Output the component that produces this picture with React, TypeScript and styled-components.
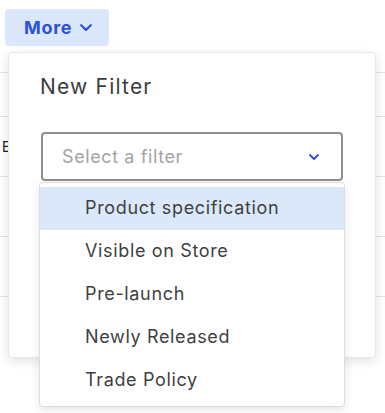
import styled, { createGlobalStyle } from "styled-components";

const GlobalStyle = createGlobalStyle`
  html, body {
    margin: 0;
    padding: 0;
    background: #ffffff;
  }
  body {
    font-family: Inter, "Noto Sans", "Liberation Sans", sans-serif;
    color: #3f3f40;
  }
`;

const Page = styled.div`
  position: relative;
  width: 385px;
  height: 413px;
  overflow: hidden;
`;

const Toolbar = styled.div`
  display: flex;
  padding: 9px 0 0 5px;
  height: 72px;
  box-sizing: border-box;
`;

const MoreButton = styled.button`
  display: flex;
  align-items: center;
  gap: 8px;
  height: 37px;
  width: 104px;
  padding: 0 0 0 19px;
  border: none;
  border-radius: 4px;
  background: #dbe7fa;
  color: #2953da;
  font-family: inherit;
  font-size: 18px;
  font-weight: 700;
  letter-spacing: 0.7px;
  cursor: pointer;
`;

const Table = styled.div`
  border-top: 1px solid #e3e4e6;
`;

const Row = styled.div<{ $tall?: boolean }>`
  height: ${(p) => (p.$tall ? 59 : 43)}px;
  border-bottom: 1px solid #e3e4e6;
  display: flex;
  align-items: center;
  padding-left: 2px;
  font-size: 14px;
  color: #1d2026;
`;

const Popover = styled.div`
  position: absolute;
  left: 8px;
  top: 52px;
  width: 368px;
  height: 306px;
  box-sizing: border-box;
  padding: 20px 32px 0;
  background: #fff;
  border: 1px solid #e7e7e9;
  border-radius: 4px;
  box-shadow: 0 3px 12px rgba(0, 0, 0, 0.12);
`;

const Title = styled.h3`
  margin: 0 0 0 -1px;
  font-size: 21px;
  font-weight: 400;
  letter-spacing: 1.2px;
  line-height: 28px;
  color: #3d3d3d;
`;

const SelectWrap = styled.div`
  position: relative;
  margin-top: 31px;
`;

const SelectBox = styled.div`
  display: flex;
  align-items: center;
  justify-content: space-between;
  height: 49px;
  box-sizing: border-box;
  padding: 0 22px 0 19px;
  border: 2px solid #8f8f8f;
  border-radius: 4px;
  font-size: 18px;
  letter-spacing: 0.6px;
  color: #a3a3a3;
`;

const Menu = styled.ul`
  position: absolute;
  left: -2px;
  right: -2px;
  top: 50px;
  margin: 0;
  padding: 4px 0;
  list-style: none;
  background: #fff;
  border: 1px solid #dcdcdc;
  border-radius: 4px;
  box-shadow: 0 3px 10px rgba(0, 0, 0, 0.1);
`;

const Option = styled.li<{ $active?: boolean }>`
  height: 43px;
  display: flex;
  align-items: center;
  padding-left: 45px;
  padding-bottom: 2px;
  box-sizing: border-box;
  font-size: 18px;
  letter-spacing: 0.65px;
  color: #3f3f40;
  background: ${(p) => (p.$active ? "#dbe8fa" : "transparent")};
`;

const Chevron = ({ size, width }: { size: number; width: number }) => (
  <svg width={size} height={size * 0.6} viewBox="0 0 10 6" fill="none">
    <path
      d="M1 1l4 4 4-4"
      stroke="#2953da"
      strokeWidth={width}
      strokeLinecap="round"
      strokeLinejoin="round"
    />
  </svg>
);

const options = [
  "Product specification",
  "Visible on Store",
  "Pre-launch",
  "Newly Released",
  "Trade Policy",
];

export default function App() {
  return (
    <Page>
      <GlobalStyle />
      <Toolbar>
        <MoreButton>
          More
          <Chevron size={12} width={1.8} />
        </MoreButton>
      </Toolbar>
      <Table>
        <Row />
        <Row $tall>Electronics</Row>
        <Row $tall />
        <Row $tall />
      </Table>
      <Popover>
        <Title>New Filter</Title>
        <SelectWrap>
          <SelectBox>
            Select a filter
            <Chevron size={10} width={1.8} />
          </SelectBox>
          <Menu>
            {options.map((o, i) => (
              <Option key={o} $active={i === 0}>
                {o}
              </Option>
            ))}
          </Menu>
        </SelectWrap>
      </Popover>
    </Page>
  );
}
